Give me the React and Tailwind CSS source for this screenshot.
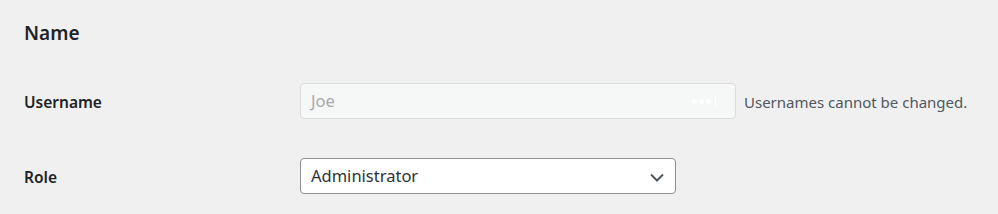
export default function App() {
  return (
    <div className="w-[998px] h-[214px] bg-[#f0f0f1] text-[#1d2327] font-['Noto_Sans',sans-serif] overflow-hidden">
      <div className="pl-6 pt-[19px]">
        <h2 className="text-[19px] leading-[28px] font-semibold">Name</h2>

        <div className="mt-[36px] flex items-center">
          <label className="w-[276px] pt-[3px] text-[15.5px] font-semibold">Username</label>
          <div className="relative w-[436px] h-9 rounded bg-[#f6f7f7] border border-[#dcdcde] flex items-center pl-[10px] pt-[1px]">
            <span className="text-[16.5px] text-[#a7aaad]">Joe</span>
            {/* password manager badge */}
            <span className="absolute right-[19px] top-1/2 -translate-y-1/2 flex items-center gap-[2px]">
              <span className="w-[5px] h-[5px] rounded-full bg-white" />
              <span className="w-[5px] h-[5px] rounded-full bg-white" />
              <span className="w-[5px] h-[5px] rounded-full bg-white" />
              <span className="ml-[2px] w-px h-[12px] bg-white" />
            </span>
          </div>
          <span className="ml-2 pt-[2px] text-[15px] text-[#50575e]">Usernames cannot be changed.</span>
        </div>

        <div className="mt-[39px] flex items-center">
          <label className="w-[276px] pt-[3px] text-[15.5px] font-semibold">Role</label>
          <div className="w-[376px] h-9 rounded bg-white border border-[#8c8f94] flex items-center justify-between pl-[10px] pr-[10px] pt-[1px]">
            <span className="text-[16.5px] text-[#2c3338]">Administrator</span>
            <svg width="16" height="16" viewBox="0 0 16 16" fill="none">
              <path d="M2 5.5l6 6 6-6" stroke="#50575e" strokeWidth="2" />
            </svg>
          </div>
        </div>
      </div>
    </div>
  )
}
